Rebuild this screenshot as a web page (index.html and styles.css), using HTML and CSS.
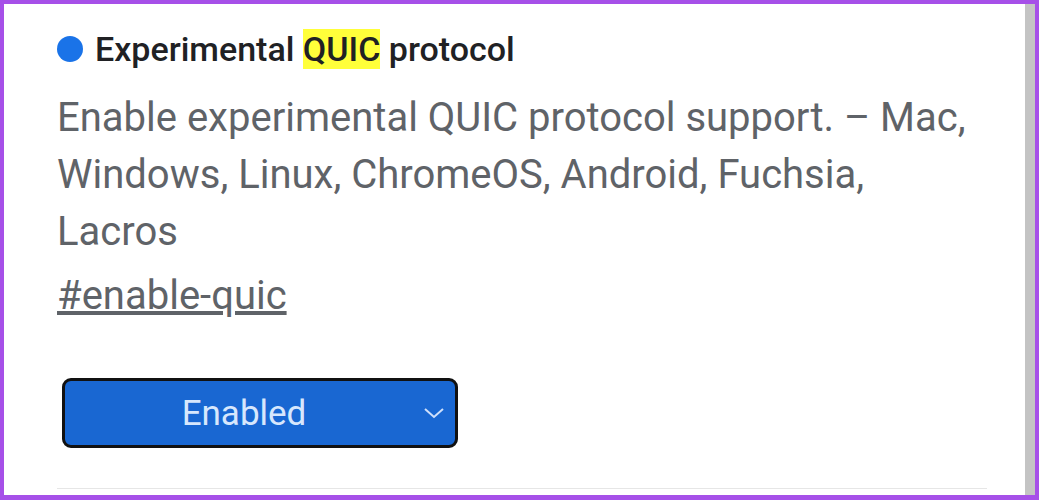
FILE: index.html
```html
<!DOCTYPE html>
<html lang="en">

<head>
    <meta charset="UTF-8">
    <meta name="viewport" content="width=device-width, initial-scale=1.0">
    <title>Experimental QUIC protocol</title>
    <link rel="stylesheet" href="styles.css">
</head>

<body>
    <div class="frame">
        <div class="page">
            <div class="flag">
                <h2 class="flag-title">
                    <span class="dot"></span>
                    <span>Experimental <mark class="hl">QUIC</mark> protocol</span>
                </h2>
                <p class="flag-desc">Enable experimental QUIC protocol support. – Mac, Windows, Linux, ChromeOS, Android, Fuchsia, Lacros</p>
                <a class="flag-link" href="#enable-quic">#enable-quic</a>
                <div class="select">
                    <span class="select-label">Enabled</span>
                    <svg class="chevron" width="22" height="14" viewBox="0 0 22 14">
                        <path d="M2 3 L11 11 L20 3" fill="none" stroke="#cfe0fb" stroke-width="2" />
                    </svg>
                </div>
                <div class="divider"></div>
            </div>
        </div>
        <div class="scrollbar"></div>
    </div>
</body>

</html>
```

FILE: styles.css
```css
html,
body {
    margin: 0;
    height: 100%;
}

body {
    font-family: Roboto, "Liberation Sans", sans-serif;
    background-color: #fff;
}

.frame {
    box-sizing: border-box;
    height: 500px;
    border: 4px solid #a650e8;
    border-bottom-width: 5px;
    display: flex;
}

.page {
    flex: 1;
    padding: 25px 0 0 53px;
}

.scrollbar {
    width: 10px;
    background-color: #c4c4c4;
}

.flag-title {
    margin: 0;
    display: flex;
    align-items: center;
    gap: 12px;
    font-size: 34px;
    font-weight: 500;
    color: #202124;
    line-height: 40px;
}

.dot {
    width: 26px;
    height: 26px;
    border-radius: 50%;
    background-color: #1a73e8;
}

.hl {
    background-color: #ffff3a;
    color: #202124;
}

.flag-desc {
    margin: 20px 0 0;
    font-size: 40px;
    line-height: 57px;
    color: #5f6368;
    width: 935px;
}

.flag-link {
    display: inline-block;
    margin-top: 14px;
    font-size: 40px;
    line-height: 44px;
    color: #5f6368;
}

.select {
    box-sizing: border-box;
    width: 396px;
    height: 70px;
    margin: 60px 0 0 5px;
    padding-right: 32px;
    border: 3px solid #111;
    border-radius: 9px;
    background-color: #1967d2;
    display: flex;
    align-items: center;
    justify-content: center;
    position: relative;
}

.select-label {
    font-size: 35px;
    color: #d7e7fd;
}

.chevron {
    position: absolute;
    right: 10px;
    top: 25px;
}

.divider {
    margin-top: 40px;
    width: 930px;
    height: 1px;
    background-color: #e6e6e6;
}
```
